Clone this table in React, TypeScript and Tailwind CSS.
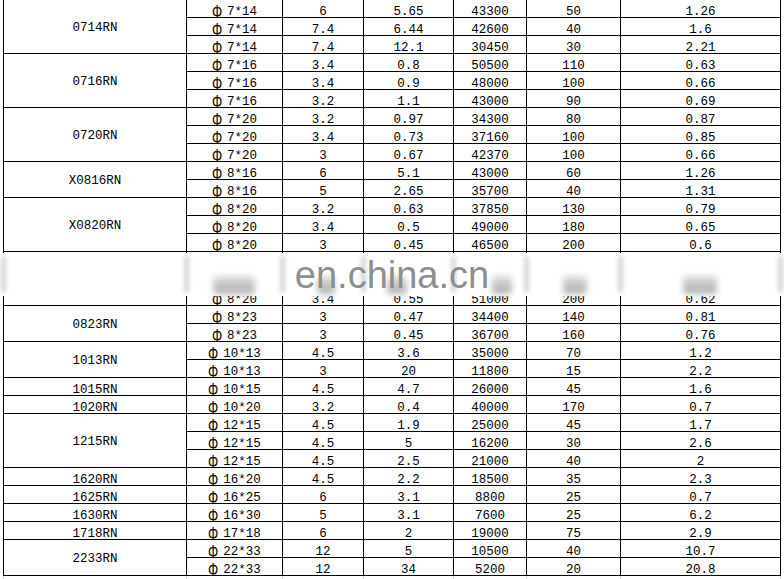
type Row = string[];

interface Group {
  name: string;
  rows: Row[];
}

const groups: Group[] = [
  {
    name: "0714RN",
    rows: [
      ["Φ7*14", "6", "5.65", "43300", "50", "1.26"],
      ["Φ7*14", "7.4", "6.44", "42600", "40", "1.6"],
      ["Φ7*14", "7.4", "12.1", "30450", "30", "2.21"],
    ],
  },
  {
    name: "0716RN",
    rows: [
      ["Φ7*16", "3.4", "0.8", "50500", "110", "0.63"],
      ["Φ7*16", "3.4", "0.9", "48000", "100", "0.66"],
      ["Φ7*16", "3.2", "1.1", "43000", "90", "0.69"],
    ],
  },
  {
    name: "0720RN",
    rows: [
      ["Φ7*20", "3.2", "0.97", "34300", "80", "0.87"],
      ["Φ7*20", "3.4", "0.73", "37160", "100", "0.85"],
      ["Φ7*20", "3", "0.67", "42370", "100", "0.66"],
    ],
  },
  {
    name: "X0816RN",
    rows: [
      ["Φ8*16", "6", "5.1", "43000", "60", "1.26"],
      ["Φ8*16", "5", "2.65", "35700", "40", "1.31"],
    ],
  },
  {
    name: "X0820RN",
    rows: [
      ["Φ8*20", "3.2", "0.63", "37850", "130", "0.79"],
      ["Φ8*20", "3.4", "0.5", "49000", "180", "0.65"],
      ["Φ8*20", "3", "0.45", "46500", "200", "0.6"],
    ],
  },
  {
    // rows hidden under the watermark, only the last one peeks out
    name: "",
    rows: [
      ["", "", "", "", "", ""],
      ["", "", "", "", "", ""],
      ["Φ8*20", "3.4", "0.55", "51000", "200", "0.62"],
    ],
  },
  {
    name: "0823RN",
    rows: [
      ["Φ8*23", "3", "0.47", "34400", "140", "0.81"],
      ["Φ8*23", "3", "0.45", "36700", "160", "0.76"],
    ],
  },
  {
    name: "1013RN",
    rows: [
      ["Φ10*13", "4.5", "3.6", "35000", "70", "1.2"],
      ["Φ10*13", "3", "20", "11800", "15", "2.2"],
    ],
  },
  { name: "1015RN", rows: [["Φ10*15", "4.5", "4.7", "26000", "45", "1.6"]] },
  { name: "1020RN", rows: [["Φ10*20", "3.2", "0.4", "40000", "170", "0.7"]] },
  {
    name: "1215RN",
    rows: [
      ["Φ12*15", "4.5", "1.9", "25000", "45", "1.7"],
      ["Φ12*15", "4.5", "5", "16200", "30", "2.6"],
      ["Φ12*15", "4.5", "2.5", "21000", "40", "2"],
    ],
  },
  { name: "1620RN", rows: [["Φ16*20", "4.5", "2.2", "18500", "35", "2.3"]] },
  { name: "1625RN", rows: [["Φ16*25", "6", "3.1", "8800", "25", "0.7"]] },
  { name: "1630RN", rows: [["Φ16*30", "5", "3.1", "7600", "25", "6.2"]] },
  { name: "1718RN", rows: [["Φ17*18", "6", "2", "19000", "75", "2.9"]] },
  {
    name: "2233RN",
    rows: [
      ["Φ22*33", "12", "5", "10500", "40", "10.7"],
      ["Φ22*33", "12", "34", "5200", "20", "20.8"],
    ],
  },
];

const spanClass: Record<number, string> = {
  1: "row-span-1 pt-[6px]",
  2: "row-span-2 pt-[3px]",
  3: "row-span-3 pt-[3px]",
};

// column borders of the sheet, used for the smeared lines under the watermark
const lineXs = [3, 186, 282, 363, 453, 526, 620, 780];

// grey smudges left by the watermark over the hidden row
const smudges = [
  "left-[213px] w-[42px]",
  "left-[317px] w-[18px]",
  "left-[387px] w-[20px]",
  "left-[492px] w-[20px]",
  "left-[563px] w-[24px]",
  "left-[683px] w-[34px]",
];

// the sheet's Φ is a tall, narrow full-width glyph
const Size = ({ value }: { value: string }) =>
  value ? (
    <>
      <span className="inline-block w-[15px]">
        <span className="inline-block origin-[0_9.6px] translate-y-[3px] scale-x-[0.8] scale-y-[1.2] font-['Liberation_Sans',Arial,sans-serif] text-[16px] leading-[8px]">
          {value.slice(0, 1)}
        </span>
      </span>
      {value.slice(1)}
    </>
  ) : null;

const Cell = ({ children, first }: { children: React.ReactNode; first?: boolean }) => (
  <div
    className={`flex items-center justify-center border-r border-b border-black pt-[6px] leading-[14px] whitespace-pre ${
      first ? "col-start-2" : ""
    }`}
  >
    {children}
  </div>
);

export default function App() {
  return (
    <div className="relative w-[784px] h-[579px] overflow-hidden bg-white text-black">
      <div className="ml-[3px] -mt-px grid w-max grid-cols-[183px_96px_81px_90px_73px_94px_160px] auto-rows-[18px] border-l border-t border-black font-['Liberation_Mono',monospace] text-[12.5px]">
        {groups.map((g, gi) => (
          <div key={gi} className="contents">
            <div
              className={`col-start-1 flex items-center justify-center border-r border-b border-black leading-[14px] ${
                spanClass[g.rows.length]
              }`}
            >
              {g.name}
            </div>
            {g.rows.map((r, i) => (
              <div key={i} className="contents">
                <Cell first>
                  <Size value={r[0]} />
                </Cell>
                {r.slice(1).map((v, j) => (
                  <Cell key={j}>{v}</Cell>
                ))}
              </div>
            ))}
          </div>
        ))}
      </div>

      {/* faint spreadsheet gridlines below the table */}
      <div className="ml-[3px] grid h-[6px] w-max grid-cols-[183px_96px_81px_90px_73px_94px_160px] border-l border-[#d8d8d8]">
        {lineXs.slice(1).map((x) => (
          <div key={x} className="border-r border-[#d8d8d8]" />
        ))}
      </div>

      {/* watermark band */}
      <div className="absolute left-0 top-[253px] h-[43px] w-full bg-white">
        {lineXs.map((x) => (
          <div
            key={x}
            className="absolute top-[3px] h-[37px] w-[5px] rounded-full bg-[#d6d6d6] blur-[2px]"
            style={{ left: x - 2 }}
          />
        ))}
        {smudges.map((s) => (
          <div
            key={s}
            className={`absolute top-[23px] h-[18px] rounded bg-gradient-to-b from-[#d0d0d0] to-[#8a8a8a] opacity-70 blur-[3px] ${s}`}
          />
        ))}
        <div className="absolute inset-x-0 top-[3px] text-center font-['Liberation_Sans',Arial,sans-serif] text-[38px] leading-[38px] text-[#8e8e8e]">
          en.china.cn
        </div>
      </div>
    </div>
  );
}
